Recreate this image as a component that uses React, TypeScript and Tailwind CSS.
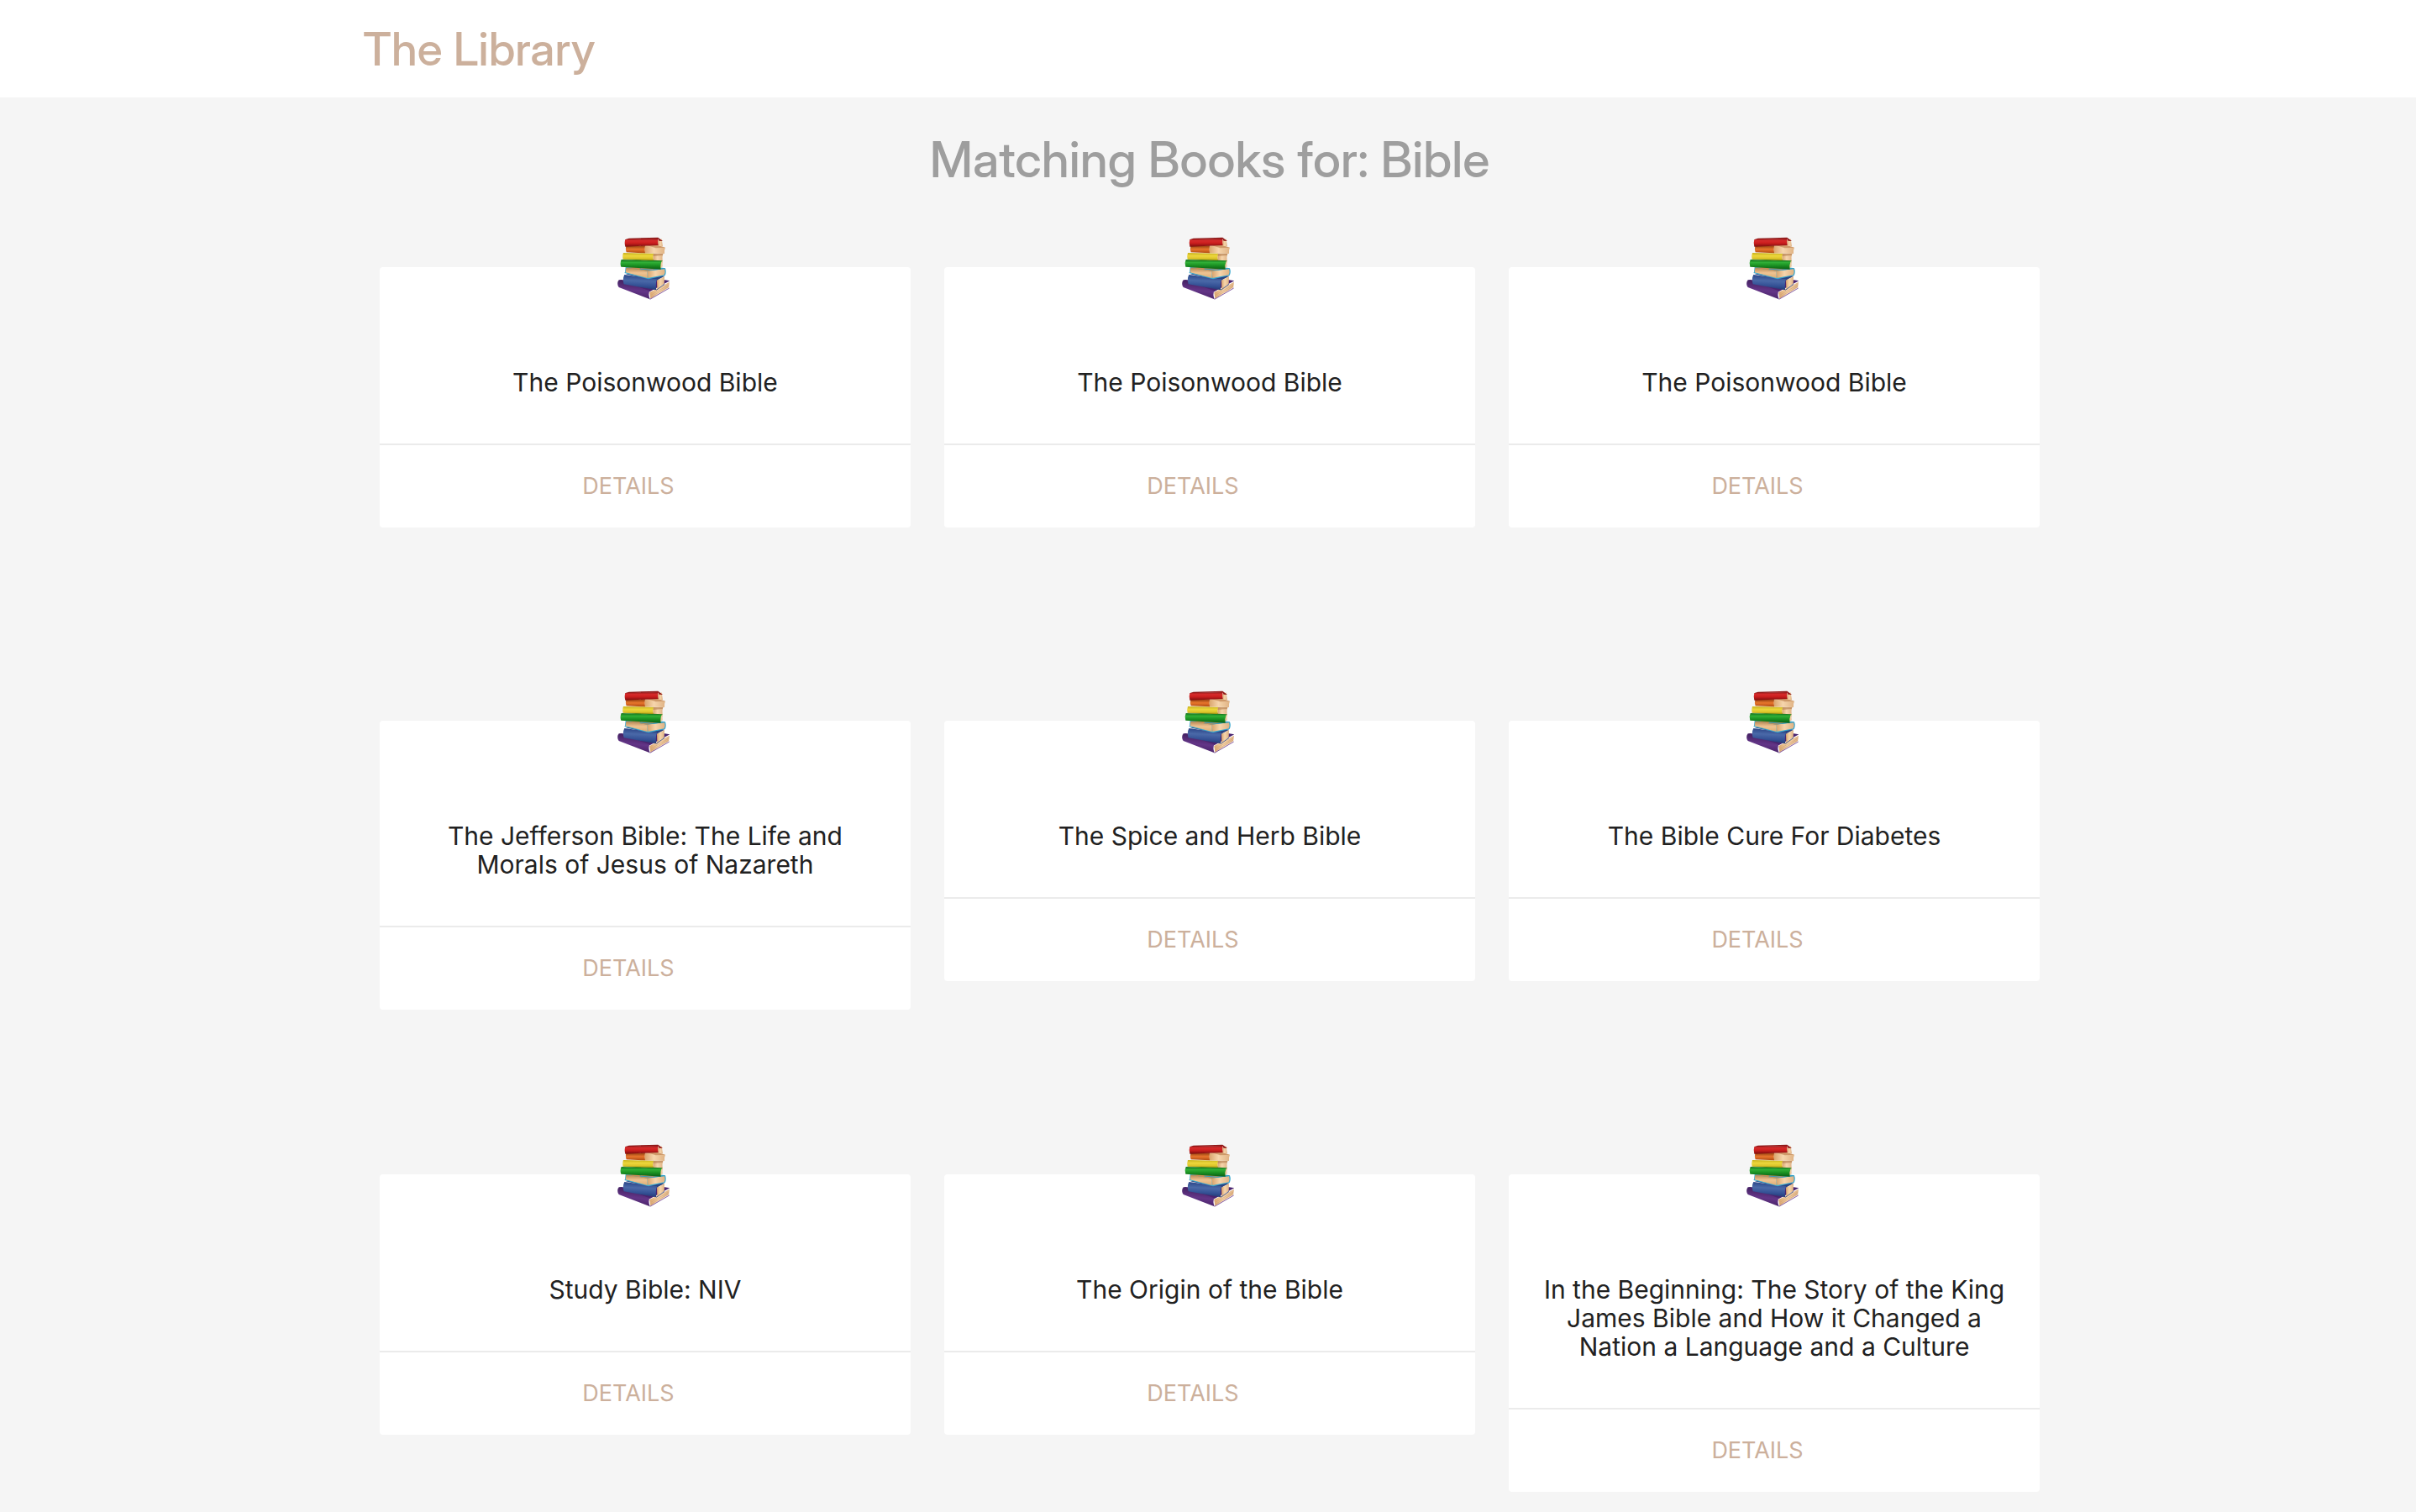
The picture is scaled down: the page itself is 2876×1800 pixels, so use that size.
const books = [
  'The Poisonwood Bible',
  'The Poisonwood Bible',
  'The Poisonwood Bible',
  'The Jefferson Bible: The Life and Morals of Jesus of Nazareth',
  'The Spice and Herb Bible',
  'The Bible Cure For Diabetes',
  'Study Bible: NIV',
  'The Origin of the Bible',
  'In the Beginning: The Story of the King James Bible and How it Changed a Nation a Language and a Culture',
];

/* Shared gradients for the book stack drawing. */
function BookGradients() {
  return (
    <svg className="absolute size-0" aria-hidden="true">
      <defs>
        <linearGradient id="red" x1="0" y1="0" x2="0" y2="1">
          <stop offset="0" stopColor="#8f1414" />
          <stop offset="0.25" stopColor="#d42a2a" />
          <stop offset="0.55" stopColor="#cc1f1f" />
          <stop offset="1" stopColor="#7c0d0d" />
        </linearGradient>
        <linearGradient id="orange" x1="0" y1="0" x2="0" y2="1">
          <stop offset="0" stopColor="#8f3f10" />
          <stop offset="0.5" stopColor="#e8762c" />
          <stop offset="1" stopColor="#b04a12" />
        </linearGradient>
        <linearGradient id="yellow" x1="0" y1="0" x2="0" y2="1">
          <stop offset="0" stopColor="#c9b31c" />
          <stop offset="0.4" stopColor="#ecd63c" />
          <stop offset="0.75" stopColor="#dcc52a" />
          <stop offset="1" stopColor="#ab9213" />
        </linearGradient>
        <linearGradient id="green" x1="0" y1="0" x2="0" y2="1">
          <stop offset="0" stopColor="#12701a" />
          <stop offset="0.3" stopColor="#2fae36" />
          <stop offset="0.6" stopColor="#1a9122" />
          <stop offset="1" stopColor="#0b5f14" />
        </linearGradient>
        <linearGradient id="blue" x1="0.1" y1="0" x2="0" y2="1">
          <stop offset="0" stopColor="#2b4588" />
          <stop offset="0.35" stopColor="#4a69a8" />
          <stop offset="0.65" stopColor="#355296" />
          <stop offset="1" stopColor="#1d3068" />
        </linearGradient>
        <linearGradient id="purple" x1="0.2" y1="0" x2="0" y2="1">
          <stop offset="0" stopColor="#42205f" />
          <stop offset="0.45" stopColor="#633587" />
          <stop offset="1" stopColor="#3f1c5c" />
        </linearGradient>
        <linearGradient id="pages" x1="0" y1="0" x2="1" y2="0">
          <stop offset="0" stopColor="#d9a46c" />
          <stop offset="0.45" stopColor="#f6d5ac" />
          <stop offset="1" stopColor="#dfb283" />
        </linearGradient>
        <linearGradient id="pagesShade" x1="0" y1="0" x2="0" y2="1">
          <stop offset="0" stopColor="#b98450" />
          <stop offset="0.5" stopColor="#eec392" />
          <stop offset="1" stopColor="#e0ae75" />
        </linearGradient>
      </defs>
    </svg>
  );
}

function BookStack() {
  return (
    <svg
      className="mx-auto -mt-9 block h-[76px] w-[68px]"
      viewBox="42 36 204 228"
      role="img"
      aria-label="Stack of books"
    >
      {/* purple */}
      <path d="M47 192 Q54 187 66 190 L214 190 L232 193 L160 232 Z" fill="#4a2470" />
      <path d="M160 234 L231 197 L228 217 L163 257Z" fill="url(#pages)" />
      <path d="M166 243 L229 207 M165 250 L229 213" stroke="#c9986a" strokeWidth="1.5" fill="none" />
      <path d="M47 194 Q51 189 58 192 L160 229 Q154 242 161 259 L50 216 Q43 207 47 194Z" fill="url(#purple)" />
      <path d="M161 259 L230 219" stroke="#6d3f90" strokeWidth="2.5" fill="none" />
      {/* blue */}
      <path d="M74 169 L140 160 L214 176 L184 192Z" fill="#2b4381" />
      <path d="M186 191 L213 177 L212 203 L187 223Z" fill="url(#pages)" />
      <path d="M70 171 L186 187 Q180 204 184 226 L68 205 Q62 187 70 171Z" fill="url(#blue)" />
      <path d="M184 226 L213 205" stroke="#2d4686" strokeWidth="2.5" fill="none" />
      {/* light blue, pages facing forward */}
      <path d="M74 144 L150 138 L216 148 Q221 162 215 174 L156 187 L70 165 L72 162Z" fill="#39a8cf" />
      <path d="M76 146 L152 158 L152 183 L74 163Z" fill="url(#pagesShade)" />
      <path d="M152 158 L213 150 Q217 161 212 172 L154 183Z" fill="url(#pages)" />
      <path d="M76 146 L110 143 L204 147 L152 158Z" fill="#c68d53" />
      <path d="M125 150 L170 154 L214 149" stroke="#2a9bc4" strokeWidth="3" fill="none" />
      {/* green */}
      <path d="M196 124 L207 120 Q204 134 206 142 L196 151Z" fill="url(#pages)" />
      <path d="M62 116 L180 116 L207 121 L198 126Z" fill="#1b7d20" />
      <path d="M59 117 L203 123 Q197 136 200 152 L58 143 Q53 130 59 117Z" fill="url(#green)" />
      {/* yellow */}
      <path d="M172 95 L208 96 Q204 108 206 121 L172 119Z" fill="url(#pages)" />
      <path d="M172 95 L208 96 L206 102 L172 105Z" fill="#b98658" opacity="0.7" />
      <path d="M66 93 L174 95 Q170 107 173 120 L65 116 Q62 104 66 93Z" fill="url(#yellow)" />
      {/* orange */}
      <path d="M142 68 L184 65 L216 74 Q211 85 213 96 L142 94Z" fill="url(#pages)" />
      <path d="M150 66 L190 66 L216 74 L182 76Z" fill="#c08552" opacity="0.7" />
      <path d="M76 69 L144 67 Q141 82 144 94 L77 91 Q73 80 76 69Z" fill="url(#orange)" />
      {/* red */}
      <path d="M190 49 L203 43 L207 70 L190 68Z" fill="url(#pages)" />
      <path d="M72 46 L86 41 L190 38 L207 51 L194 50 L190 43Z" fill="#8e1717" />
      <path d="M73 45 L191 42 Q188 54 191 66 L73 71 Q69 58 73 45Z" fill="url(#red)" />
    </svg>
  );
}

function BookCard({ title }: { title: string }) {
  return (
    <article className="mx-5 rounded-sm bg-white text-center">
      <div className="flow-root px-10 pb-14">
        <BookStack />
        <h2 className="mt-20 text-[30px] leading-[34px] text-[#212121]">{title}</h2>
      </div>
      <div className="border-t-2 border-[#ebebeb] py-8 text-[27px] leading-[34px]">
        <a href="#details" className="mr-10 text-[#ccb09c] uppercase">
          Details
        </a>
      </div>
    </article>
  );
}

export default function App() {
  return (
    <div className="min-h-screen bg-[#f5f5f5] font-['Inter',sans-serif]">
      <BookGradients />
      <header className="bg-white pl-1">
        <div className="mx-auto w-[70.2%]">
          <a
            href="#home"
            className="block w-fit font-['Inter_Display','Inter',sans-serif] text-[55px] leading-[116px] font-medium text-[#ccb09c]"
          >
            The Library
          </a>
        </div>
      </header>
      <main className="pl-1">
        <div className="mx-auto w-[70.2%]">
          <h1 className="pt-10 text-center font-['Inter_Display','Inter',sans-serif] text-[59px] leading-[68px] font-medium text-[#9e9e9e]">
            Matching Books for: Bible
          </h1>
          <div className="grid auto-rows-[540px] grid-cols-3 items-start pt-[94px]">
            {books.map((title, i) => (
              <BookCard key={i} title={title} />
            ))}
          </div>
        </div>
      </main>
    </div>
  );
}
